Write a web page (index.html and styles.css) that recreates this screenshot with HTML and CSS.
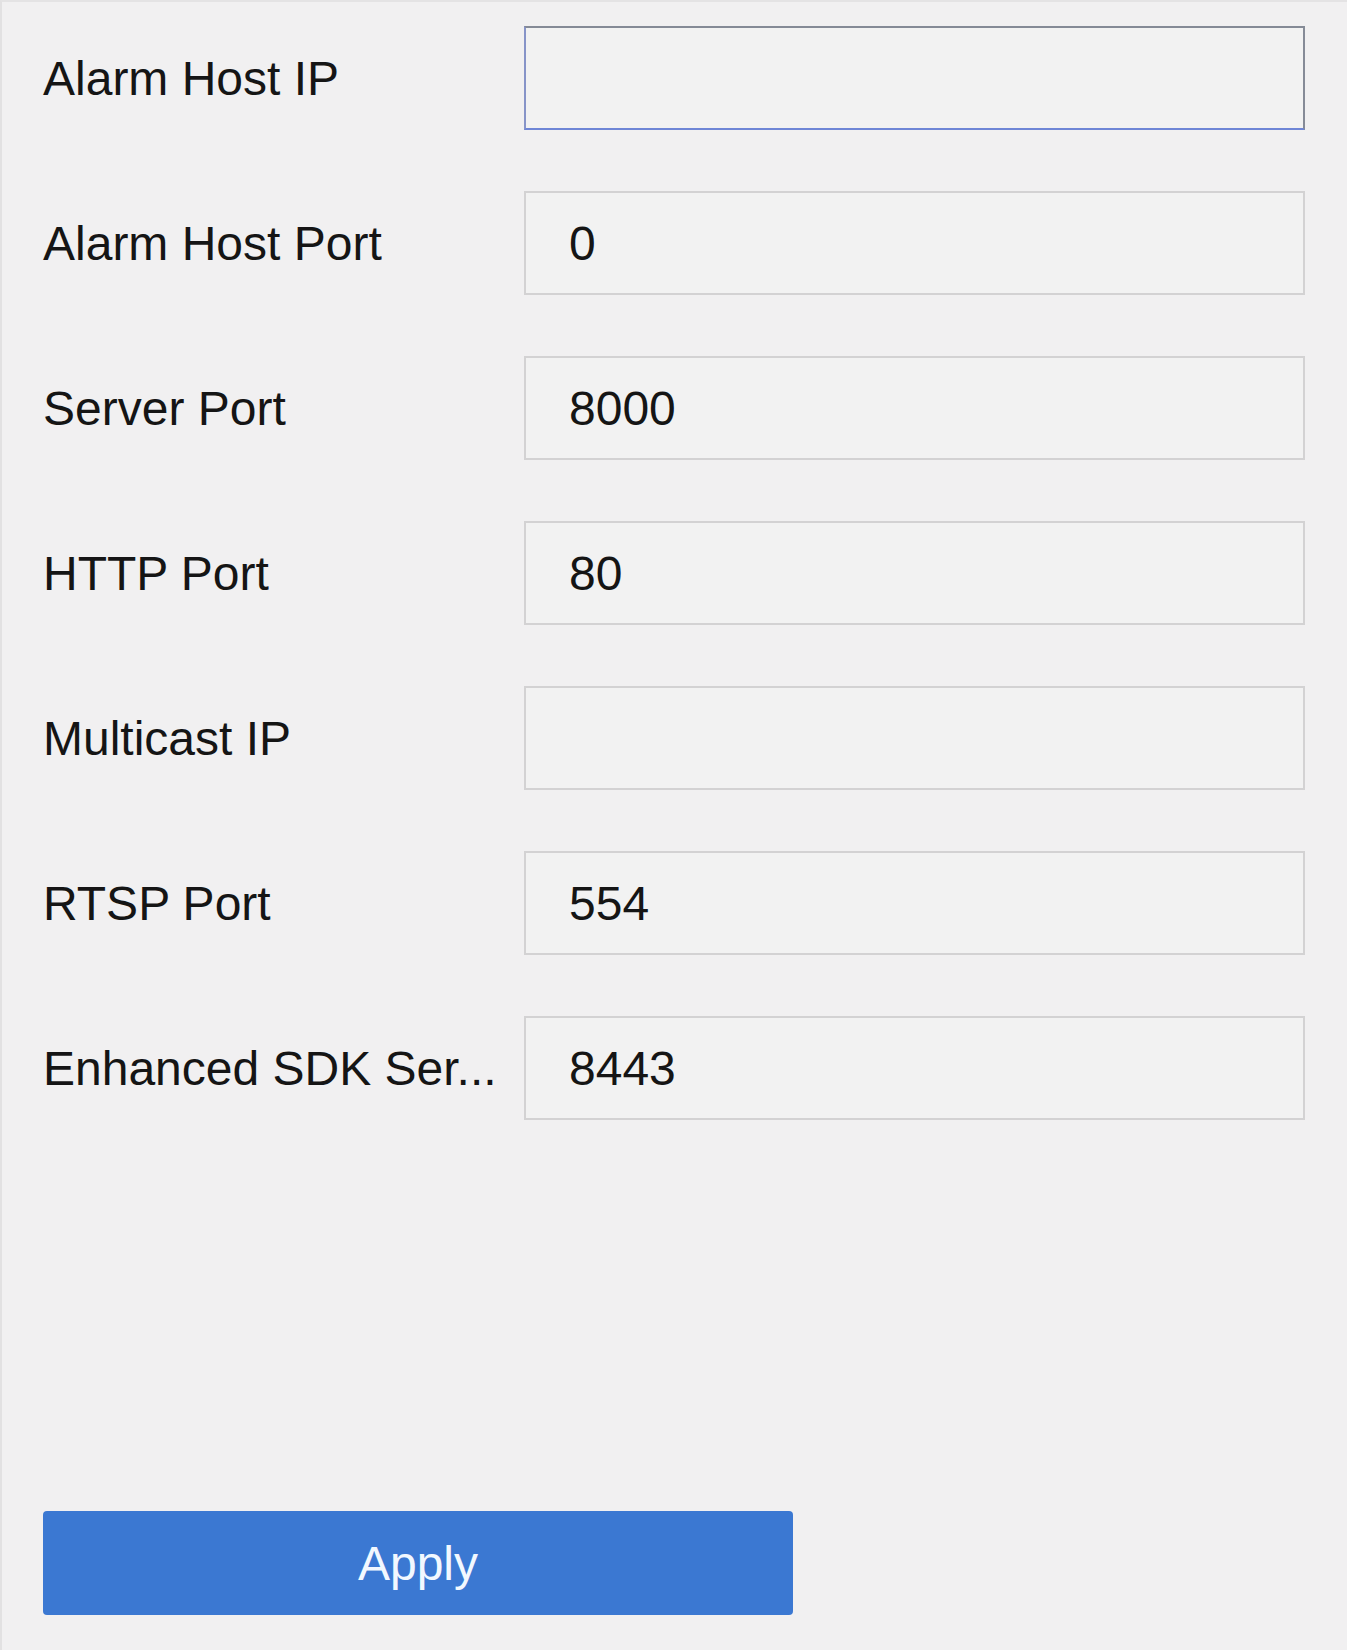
FILE: index.html
```html
<!DOCTYPE html>
<html lang="en">
<head>
  <meta charset="UTF-8" />
  <meta name="viewport" content="width=device-width, initial-scale=1.0"/>
  <title>Network Ports</title>
  <link rel="stylesheet" href="styles.css">
</head>
<body>
  <div class="panel">
    <div class="form">
      <label class="label" for="alarmHostIp">Alarm Host IP</label>
      <input class="field focused" id="alarmHostIp" type="text" value="">

      <label class="label" for="alarmHostPort">Alarm Host Port</label>
      <input class="field" id="alarmHostPort" type="text" value="0">

      <label class="label" for="serverPort">Server Port</label>
      <input class="field" id="serverPort" type="text" value="8000">

      <label class="label" for="httpPort">HTTP Port</label>
      <input class="field" id="httpPort" type="text" value="80">

      <label class="label" for="multicastIp">Multicast IP</label>
      <input class="field" id="multicastIp" type="text" value="">

      <label class="label" for="rtspPort">RTSP Port</label>
      <input class="field" id="rtspPort" type="text" value="554">

      <!-- label is shortened the same way the device UI does it -->
      <label class="label" for="sdkPort" title="Enhanced SDK Service Port">Enhanced SDK Ser...</label>
      <input class="field" id="sdkPort" type="text" value="8443">
    </div>

    <button class="apply" id="applyBtn">Apply</button>
  </div>
</body>
</html>
```

FILE: styles.css
```css
body {
  margin: 0;
  background: #f1f0f1;
  font-family: "Liberation Sans", Arial, sans-serif;
  color: #151515;
}

.panel {
  min-height: 1650px;
  box-sizing: border-box;
  padding: 24px 42px 0 41px;
  border-top: 2px solid #e4e3e4;
  border-left: 2px solid #e2e1e2;
}

.form {
  display: grid;
  grid-template-columns: 481px 1fr;
  row-gap: 61px;
  align-items: center;
}

.label {
  font-size: 48px;
  white-space: nowrap;
}

.field {
  height: 104px;
  box-sizing: border-box;
  margin: 0;
  padding: 0 0 0 43px;
  border: 2px solid #d3d2d3;
  background: #f2f2f2;
  font-family: "Liberation Sans", Arial, sans-serif;
  font-size: 48px;
  color: #151515;
  outline: none;
  width: 100%;
}

.field.focused {
  border-color: #858a96 #868b97 #6f86d6 #8794c8;
}

.apply {
  display: block;
  width: 750px;
  height: 104px;
  margin-top: 391px;
  border: none;
  border-radius: 4px;
  background: #3b78d2;
  color: #f2f8ff;
  font-family: "Liberation Sans", Arial, sans-serif;
  font-size: 48px;
  cursor: pointer;
}
```
